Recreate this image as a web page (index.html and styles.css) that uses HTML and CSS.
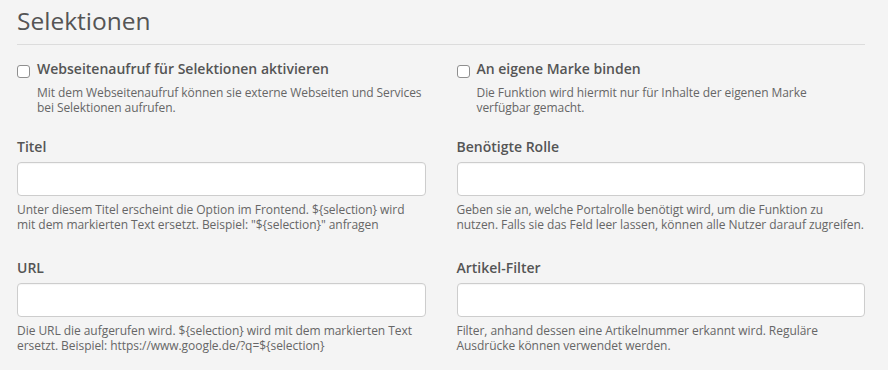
FILE: index.html
```html
<!DOCTYPE html>
<html lang="de">
<head>
<meta charset="utf-8">
<title>Selektionen</title>
<link rel="stylesheet" href="styles.css">
</head>
<body>
<div class="page">
  <h1 class="title">Selektionen</h1>
  <div class="grid">
    <div class="check-group">
      <label class="check-row"><input type="checkbox" class="check"><span class="check-label">Webseitenaufruf für Selektionen aktivieren</span></label>
      <p class="check-desc">Mit dem Webseitenaufruf können sie externe Webseiten und Services bei Selektionen aufrufen.</p>
    </div>
    <div class="check-group">
      <label class="check-row"><input type="checkbox" class="check"><span class="check-label">An eigene Marke binden</span></label>
      <p class="check-desc">Die Funktion wird hiermit nur für Inhalte der eigenen Marke verfügbar gemacht.</p>
    </div>
    <div class="field">
      <label class="field-label">Titel</label>
      <input type="text" class="field-input">
      <p class="help">Unter diesem Titel erscheint die Option im Frontend. ${selection} wird mit dem markierten Text ersetzt. Beispiel: "${selection}" anfragen</p>
    </div>
    <div class="field">
      <label class="field-label">Benötigte Rolle</label>
      <input type="text" class="field-input">
      <p class="help">Geben sie an, welche Portalrolle benötigt wird, um die Funktion zu nutzen. Falls sie das Feld leer lassen, können alle Nutzer darauf zugreifen.</p>
    </div>
    <div class="field">
      <label class="field-label">URL</label>
      <input type="text" class="field-input">
      <p class="help">Die URL die aufgerufen wird. ${selection} wird mit dem markierten Text ersetzt. Beispiel: https://www.google.de/?q=${selection}</p>
    </div>
    <div class="field">
      <label class="field-label">Artikel-Filter</label>
      <input type="text" class="field-input">
      <p class="help">Filter, anhand dessen eine Artikelnummer erkannt wird. Reguläre Ausdrücke können verwendet werden.</p>
    </div>
  </div>
</div>
</body>
</html>
```
FILE: styles.css
```css
html, body {
  margin: 0;
  padding: 0;
  background: #f4f4f4;
}
body {
  font-family: "Open Sans", "Liberation Sans", sans-serif;
  color: #555;
}
.page {
  width: 848px;
  padding: 0 17px;
}
.title {
  margin: 0;
  padding: 3px 0 5px;
  font-size: 24.5px;
  line-height: 36px;
  font-weight: 400;
  color: #555;
  border-bottom: 1px solid #dcdcdc;
}
.grid {
  display: grid;
  grid-template-columns: 1fr 1fr;
  column-gap: 31px;
  margin-top: 14px;
}
.check-group {
  margin-bottom: 22px;
}
.check-row {
  display: flex;
  align-items: flex-start;
  gap: 7px;
}
.check {
  appearance: none;
  -webkit-appearance: none;
  margin: 6px 0 0;
  width: 13px;
  height: 13px;
  flex: none;
  background: #fff;
  border: 1px solid #8f8f8f;
  border-radius: 3px;
  box-sizing: border-box;
}
.check-label {
  font-size: 14px;
  line-height: 20px;
  font-weight: 600;
  color: #555;
}
.check-desc {
  max-width: 385px;
  margin: 6px 0 0 20px;
  font-size: 12px;
  line-height: 15px;
  letter-spacing: -0.07px;
  color: #666;
}
.field {
  margin-bottom: 26px;
}
.field-label {
  display: block;
  font-size: 14px;
  line-height: 20px;
  font-weight: 600;
  color: #555;
}
.field-input {
  display: block;
  box-sizing: border-box;
  width: 100%;
  height: 34px;
  margin: 5px 0 0;
  background: #fff;
  border: 1px solid #cdcdcd;
  border-radius: 4px;
  box-shadow: inset 0 1px 1px rgba(0,0,0,0.04);
}
.help {
  margin: 6px 0 0;
  font-size: 12px;
  line-height: 15px;
  letter-spacing: -0.05px;
  color: #666;
}
```
